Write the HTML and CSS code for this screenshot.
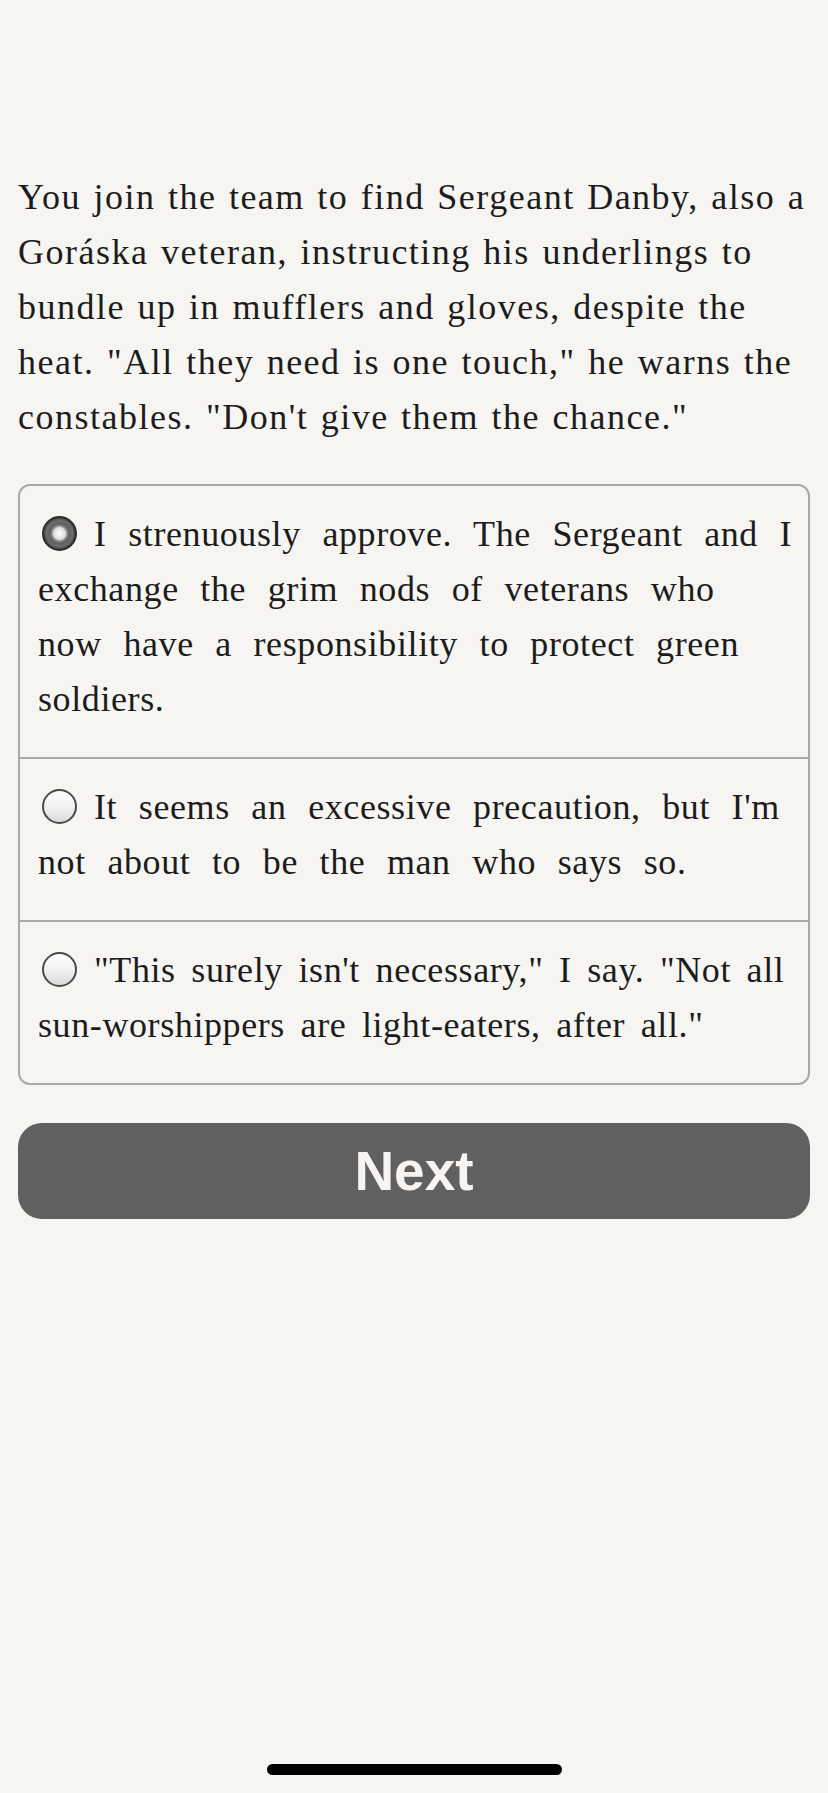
FILE: index.html
```html
<!DOCTYPE html>
<html lang="en">
<head>
    <meta charset="UTF-8">
    <title>Choice</title>
    <link rel="stylesheet" href="styles.css">
</head>
<body>
    <div class="page">
        <p class="story">You join the team to find Sergeant Danby, also a Goráska veteran, instructing his underlings to bundle up in mufflers and gloves, despite the heat. "All they need is one touch," he warns the constables. "Don't give them the chance."</p>

        <form class="choices">
            <div class="choice">
                <label><input type="radio" name="choice" checked><span class="radio"></span>I strenuously approve. The Sergeant and I exchange the grim nods of veterans who now have a responsibility to protect green soldiers.</label>
            </div>
            <div class="choice">
                <label><input type="radio" name="choice"><span class="radio"></span>It seems an excessive precaution, but I'm not about to be the man who says so.</label>
            </div>
            <div class="choice compact">
                <label><input type="radio" name="choice"><span class="radio"></span>"This surely isn't necessary," I say. "Not all sun-worshippers are light-eaters, after all."</label>
            </div>
        </form>

        <button class="next" type="button">Next</button>
    </div>

    <div class="home-bar"></div>
</body>
</html>
```

FILE: styles.css
```css
html, body {
  margin: 0;
  padding: 0;
  background: #f7f5f2;
}

body {
  font-family: "Liberation Serif", serif;
  color: #1c1c1c;
  min-height: 1793px;
  position: relative;
}

.page {
  padding: 170px 16px 0 18px;
}

.story {
  margin: 0;
  font-size: 36px;
  line-height: 55px;
  letter-spacing: 1.5px;
  word-spacing: 2px;
}

.choices {
  margin-top: 39px;
  margin-right: 2px;
  border: 2px solid #a9a9a9;
  border-radius: 12px;
}

/* spacing tuned so the lines break where the original ones do */
.choice {
  padding: 21px 12px 30px 18px;
  font-size: 36px;
  line-height: 55px;
  letter-spacing: 0.6px;
  word-spacing: 12px;
}

.choice.compact {
  word-spacing: 6px;
}

.choice + .choice {
  border-top: 2px solid #a9a9a9;
}

.choice input {
  display: none;
}

.radio {
  display: inline-block;
  width: 31px;
  height: 31px;
  border-radius: 50%;
  border: 2px solid #4a4a4a;
  background: linear-gradient(180deg, #ffffff 0%, #f2f2f2 50%, #d9d9d9 100%);
  vertical-align: -5px;
  margin: 0 17px 0 4px;
}

.choice input:checked + .radio {
  border-color: #2e2e2e;
  background: radial-gradient(circle, #ffffff 0, #dcdcdc 6px, #8c8c8c 7.5px, #5e5e5e 10px, #6d6d6d 13px, #3e3e3e 16px);
}

.next {
  display: block;
  width: calc(100% - 2px);
  height: 96px;
  margin-top: 38px;
  border: none;
  border-radius: 24px;
  background: #616060;
  color: #f7f4f1;
  font-family: "Liberation Sans", sans-serif;
  font-weight: bold;
  font-size: 55px;
}

.home-bar {
  position: absolute;
  left: 267px;
  top: 1764px;
  width: 295px;
  height: 11px;
  border-radius: 6px;
  background: #000;
}
```
